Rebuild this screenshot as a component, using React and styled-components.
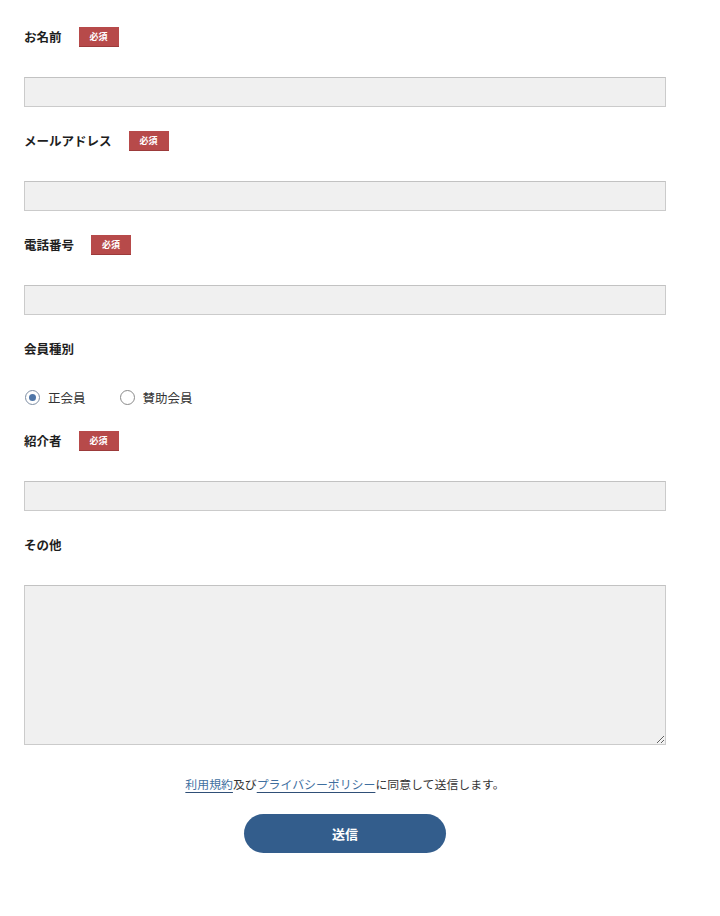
import React from "react";
import styled, { createGlobalStyle } from "styled-components";

const Global = createGlobalStyle`
  html, body { margin: 0; padding: 0; background: #fff; }
  body {
    font-family: "Noto Sans CJK JP", "Noto Sans", sans-serif;
    color: #222;
  }
  * { box-sizing: border-box; }
`;

const Form = styled.form`
  display: flex;
  flex-direction: column;
  gap: 24px;
  width: 720px;
  padding: 27px 54px 60px 24px;
`;

const Field = styled.div`
  display: flex;
  flex-direction: column;
  gap: ${(p) => p.$gap || 30}px;
`;

const LabelRow = styled.div`
  display: flex;
  align-items: center;
  gap: 17px;
  height: 20px;
`;

const Label = styled.label`
  font-size: 12.5px;
  font-weight: 700;
  color: #1e1e1e;
  line-height: 20px;
`;

const Badge = styled.span`
  display: inline-flex;
  align-items: center;
  justify-content: center;
  width: 40px;
  height: 20px;
  background: #b74a4a;
  border-bottom: 1px solid #9c3a3a;
  color: #fff;
  font-size: 9px;
  font-weight: 700;
  line-height: 1;
`;

const Input = styled.input`
  display: block;
  width: 100%;
  height: 30px;
  margin: 0;
  padding: 4px 8px;
  background: #f0f0f0;
  border: 1px solid #cbcbcb;
  border-top-color: #c2c2c2;
  border-radius: 0;
  font: inherit;
  outline: none;
`;

const TextArea = styled.textarea`
  display: block;
  width: 100%;
  height: 160px;
  margin: 0;
  padding: 6px 8px;
  background: #f0f0f0;
  border: 1px solid #cbcbcb;
  border-top-color: #c2c2c2;
  border-radius: 0;
  font: inherit;
  outline: none;
  resize: both;
`;

const RadioGroup = styled.div`
  display: flex;
  align-items: center;
  gap: 34px;
  height: 20px;
  padding-left: 1px;
`;

const RadioLabel = styled.label`
  display: flex;
  align-items: center;
  gap: 8px;
  font-size: 12.5px;
  color: #333;
  cursor: pointer;
`;

const Radio = styled.input.attrs({ type: "radio" })`
  appearance: none;
  -webkit-appearance: none;
  margin: 0;
  width: 15px;
  height: 15px;
  border-radius: 50%;
  border: 1px solid #8a8a8a;
  background: #fff;
  display: grid;
  place-items: center;
  &:checked {
    border-color: #7e8ea3;
  }
  &:checked::after {
    content: "";
    width: 7px;
    height: 7px;
    border-radius: 50%;
    background: #4f76a8;
  }
`;

const Terms = styled.p`
  margin: 5px 0 0;
  text-align: center;
  font-size: 11.9px;
  line-height: 20px;
  color: #333;
`;

const Link = styled.a`
  color: #3f6f9f;
  text-decoration: underline;
  text-underline-offset: 3px;
  text-decoration-color: #2f4f77;
`;

const Submit = styled.button`
  display: block;
  margin: 20px auto 0;
  width: 202px;
  height: 39px;
  border: none;
  border-radius: 20px;
  background: #335d8c;
  color: #fff;
  font-family: inherit;
  font-size: 13px;
  font-weight: 700;
  cursor: pointer;
`;

const Footer = styled.div`
  display: flex;
  flex-direction: column;
`;

function TextField({ label, required }) {
  return (
    <Field>
      <LabelRow>
        <Label>{label}</Label>
        {required && <Badge>必須</Badge>}
      </LabelRow>
      <Input type="text" />
    </Field>
  );
}

export default function App() {
  return (
    <>
      <Global />
      <Form onSubmit={(e) => e.preventDefault()}>
        <TextField label="お名前" required />
        <TextField label="メールアドレス" required />
        <TextField label="電話番号" required />
        <Field $gap={28}>
          <LabelRow>
            <Label>会員種別</Label>
          </LabelRow>
          <RadioGroup>
            <RadioLabel>
              <Radio name="type" defaultChecked />
              正会員
            </RadioLabel>
            <RadioLabel>
              <Radio name="type" />
              賛助会員
            </RadioLabel>
          </RadioGroup>
        </Field>
        <TextField label="紹介者" required />
        <Field>
          <LabelRow>
            <Label>その他</Label>
          </LabelRow>
          <TextArea />
        </Field>
        <Footer>
          <Terms>
            <Link href="#">利用規約</Link>及び<Link href="#">プライバシーポリシー</Link>に同意して送信します。
          </Terms>
          <Submit type="submit">送信</Submit>
        </Footer>
      </Form>
    </>
  );
}
